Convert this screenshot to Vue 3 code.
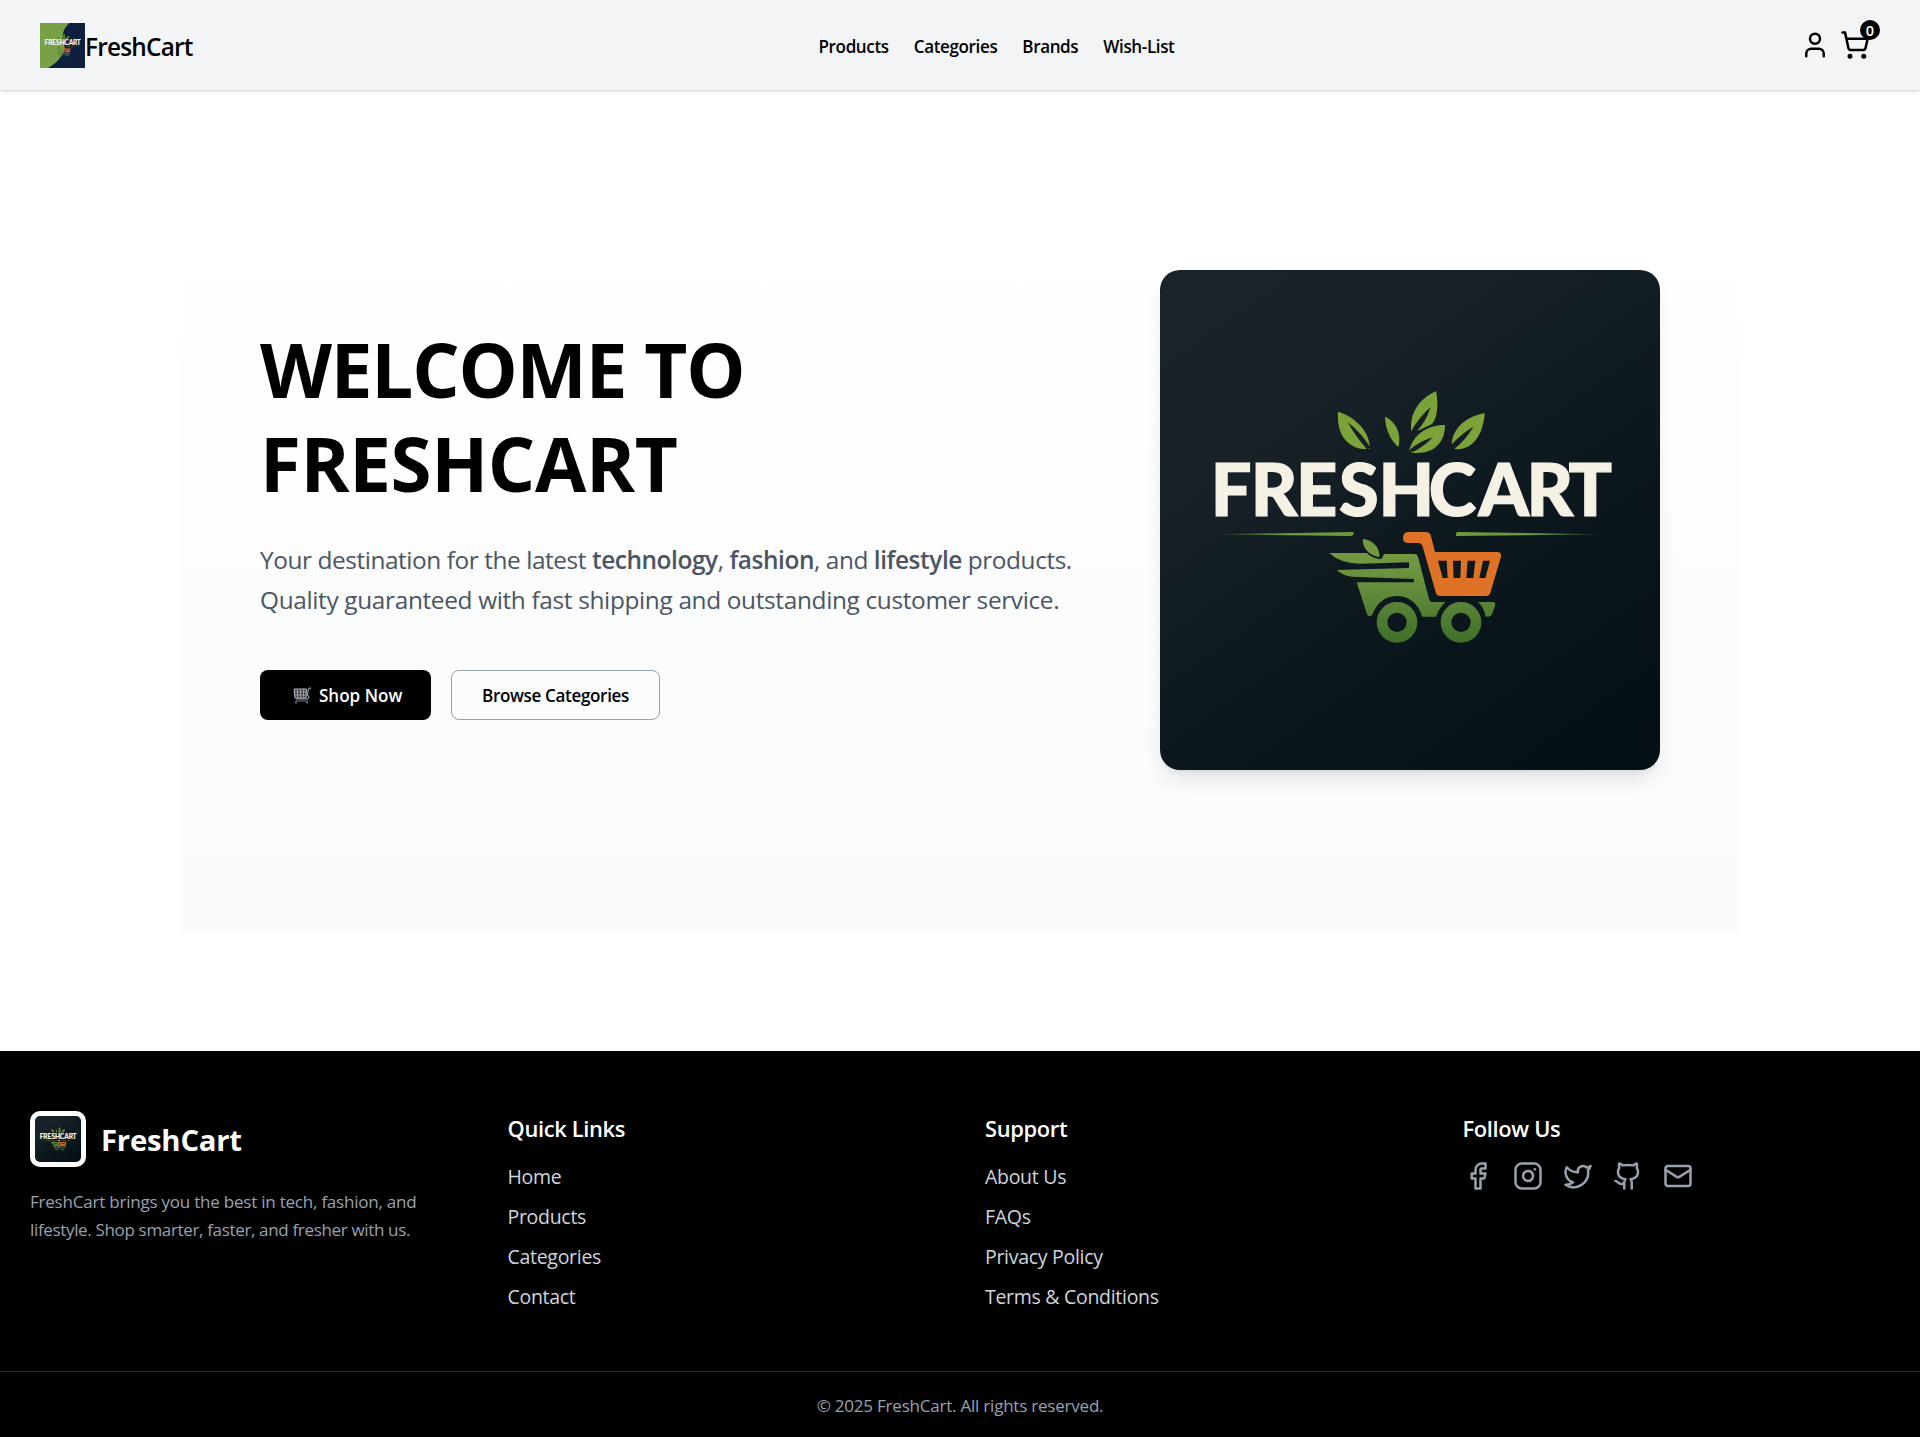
<script setup>
const navLinks = ['Products', 'Categories', 'Brands', 'Wish-List']

const footerColumns = [
  { title: 'Quick Links', links: ['Home', 'Products', 'Categories', 'Contact'] },
  { title: 'Support', links: ['About Us', 'FAQs', 'Privacy Policy', 'Terms & Conditions'] },
]

const socials = [
  { name: 'facebook', paths: ['M18 2h-3a5 5 0 0 0-5 5v3H7v4h3v8h4v-8h3l1-4h-4V7a1 1 0 0 1 1-1h3z'] },
  {
    name: 'instagram',
    paths: [
      'M7 2h10a5 5 0 0 1 5 5v10a5 5 0 0 1-5 5H7a5 5 0 0 1-5-5V7a5 5 0 0 1 5-5z',
      'M16 11.37A4 4 0 1 1 12.63 8 4 4 0 0 1 16 11.37z',
      'M17.5 6.5h.01',
    ],
  },
  {
    name: 'twitter',
    paths: ['M22 4s-.7 2.1-2 3.4c1.6 10-9.4 17.3-18 11.6 2.2.1 4.4-.6 6-2C3 15.5.5 9.6 3 5c2.2 2.6 5.6 4.1 9 4-.9-4.2 4-6.6 7-3.8 1.1 0 3-1.2 3-1.2z'],
  },
  {
    name: 'github',
    paths: [
      'M15 22v-4a4.8 4.8 0 0 0-1-3.5c3 0 6-2 6-5.5.08-1.25-.27-2.48-1-3.5.28-1.15.28-2.35 0-3.5 0 0-1 0-3 1.5-2.64-.5-5.36-.5-8 0C6 2 5 2 5 2c-.3 1.15-.3 2.35 0 3.5A5.403 5.403 0 0 0 4 9c0 3.5 3 5.5 6 5.5-.39.49-.68 1.05-.85 1.65-.17.6-.22 1.23-.15 1.85v4',
      'M9 18c-4.51 2-5-2-7-2',
    ],
  },
  {
    name: 'mail',
    paths: ['M4 4h16a2 2 0 0 1 2 2v12a2 2 0 0 1-2 2H4a2 2 0 0 1-2-2V6a2 2 0 0 1 2-2z', 'm22 7-8.97 5.7a1.94 1.94 0 0 1-2.06 0L2 7'],
  },
]
</script>

<template>
  <div class="page">
    <!-- Shared brand artwork -->
    <svg class="sprite" aria-hidden="true">
      <defs>
        <linearGradient id="night" x1="0.15" y1="0" x2="0.85" y2="1">
          <stop offset="0" stop-color="#1a2329" />
          <stop offset="0.25" stop-color="#182127" />
          <stop offset="0.55" stop-color="#0d191f" />
          <stop offset="1" stop-color="#041015" />
        </linearGradient>
        <linearGradient id="leaf" gradientUnits="userSpaceOnUse" x1="0" y1="540" x2="0" y2="820">
          <stop offset="0" stop-color="#759c43" />
          <stop offset="0.4" stop-color="#648c3c" />
          <stop offset="1" stop-color="#3f6f2a" />
        </linearGradient>
        <linearGradient id="fadeLeft" x1="0" x2="1">
          <stop offset="0" stop-color="#6d9a38" stop-opacity="0.3" />
          <stop offset="0.5" stop-color="#6d9a38" />
        </linearGradient>
        <linearGradient id="fadeRight" x1="1" x2="0">
          <stop offset="0" stop-color="#6d9a38" stop-opacity="0.3" />
          <stop offset="0.5" stop-color="#6d9a38" />
        </linearGradient>
        <symbol id="artwork" viewBox="0 0 500 500">
          <g transform="translate(40 100) scale(0.33333)">
            <g fill="#7ca23a">
              <path d="M414 125C462 138 512 185 509 237C455 242 408 205 414 125Z" />
              <path d="M555 140C584 152 606 188 595 231C573 212 556 180 555 140Z" />
              <path d="M708 63C718 112 709 155 690 167C668 176 655 183 634 184C628 132 655 88 708 63Z" />
              <path
                stroke="#141e24"
                stroke-width="14"
                paint-order="stroke"
                d="M735 165C735 218 700 255 637 248L628 240C640 195 680 165 735 165Z"
              />
              <path d="M854 130C850 197 815 243 764 237L755 222C757 175 800 138 854 130Z" />
            </g>
            <g fill="#141e24">
              <path d="M443 156Q482 187 511 232L502 239Q467 200 443 156Z" />
              <path d="M692 111Q676 160 648 185L633 185Q656 142 692 111Z" />
              <path d="M698 202Q675 228 639 246L627 241Q657 215 698 202Z" />
              <path d="M820 170Q798 209 763 237L754 224Q782 193 820 170Z" />
            </g>
            <path fill="url(#fadeLeft)" d="M45 493L455 486Q464 486 461 492Q458 499 448 498Z" />
            <path fill="url(#fadeRight)" d="M1216 493L775 486Q768 486 768 492V498Z" />
            <g fill="url(#leaf)">
              <path
                d="M388 549L500 549L545 566L552 552H645Q652 552 654 560L688 690Q690 696 697 696H737Q718 712 708 740H667C655 700 625 678 590 678C552 678 527 705 518 732Q514 740 506 739Q502 738 500 730L470 637H642V627L455 620Q425 615 411 600L627 594V577L480 581Q420 580 388 549Z"
              />
              <path d="M834 696H880Q888 698 885 708L876 733Q873 740 865 740H857Q852 712 834 696Z" />
              <path
                fill="#71993f"
                stroke="#121d22"
                stroke-width="10"
                paint-order="stroke"
                d="M489 507C517 508 541 533 538 562C509 556 486 536 489 507Z"
              />
            </g>
            <g fill="none" stroke="url(#leaf)" stroke-width="32">
              <circle cx="591" cy="757" r="45" />
              <circle cx="783" cy="757" r="45" />
            </g>
            <path
              fill="#de7226"
              fill-rule="evenodd"
              d="M624 486H678Q690 487 693 498L705 546H893Q905 547 903 560L871 668Q868 678 858 678H718Q710 678 708 670L668 530Q665 519 655 519H622Q609 517 609 503Q609 488 624 486ZM714 572L728 624H743L740 572ZM759 572L761 624H781L783 572ZM803 572L799 624H820L826 572ZM849 572L838 624H856L870 572Z"
            />
          </g>
          <text class="wordmark" y="246.3" x="50.8 90.8 136 178.9 218.4 268.7 318.4 366.4 408.6">FRESHCART</text>
        </symbol>
      </defs>
    </svg>

    <header class="header">
      <a class="brand">
        <svg class="brand-logo" viewBox="0 0 500 500">
          <rect width="500" height="500" fill="#101f40" />
          <path fill="#78a046" d="M0 0H325C235 90 250 150 270 210C285 330 210 430 90 500H0Z" />
          <use href="#artwork" width="500" height="500" />
        </svg>
        <span class="brand-name">FreshCart</span>
      </a>
      <nav class="nav">
        <a v-for="link in navLinks" :key="link">{{ link }}</a>
      </nav>
      <div class="actions">
        <svg class="icon" viewBox="0 0 24 24">
          <path d="M19 21v-2a4 4 0 0 0-4-4H9a4 4 0 0 0-4 4v2" />
          <circle cx="12" cy="7" r="4" />
        </svg>
        <div class="cart">
          <svg class="icon" viewBox="0 0 24 24">
            <circle cx="8" cy="21" r="1" />
            <circle cx="19" cy="21" r="1" />
            <path d="M2.05 2.05h2l2.66 12.42a2 2 0 0 0 2 1.58h9.78a2 2 0 0 0 1.95-1.57l1.65-7.43H5.12" />
          </svg>
          <span class="badge">0</span>
        </div>
      </div>
    </header>

    <main class="main">
      <section class="hero">
        <div class="hero-copy">
          <h1>
            <span class="line-one">WELCOME TO</span>
            <span class="line-two">FRESHCART</span>
          </h1>
          <p>
            <span class="lead">Your destination for the latest <strong>technology</strong>, <strong>fashion</strong>, and
            <strong>lifestyle</strong> products.</span><br />
            Quality guaranteed with fast shipping and outstanding customer service.
          </p>
          <div class="buttons">
            <a class="btn btn-dark">
              <svg class="trolley" viewBox="0 0 18 17" fill="none">
                <path d="M1 2h12.5l-0.500 9H2z" fill="#3c3e43" stroke="#b9bbc0" />
                <path d="M4.500 2.500v8M7.500 2.500v8M10.500 2.500v8M1.500 5h11.500M2 8h11" stroke="#b9bbc0" stroke-width="0.7" />
                <path d="M17.500 1l-2 1-1 6 1.500 2-1.500 2H3" stroke="#a9abb0" stroke-width="1.100" />
                <path d="M2.500 14h12" stroke="#77797e" />
                <path d="M3 14.500v2M14 14.500v2M17 0.500v1.500" stroke="#5b8fd0" stroke-width="1.500" />
              </svg>
              Shop Now
            </a>
            <a class="btn btn-light">Browse Categories</a>
          </div>
        </div>
        <svg class="hero-image" viewBox="0 0 500 500">
          <rect width="500" height="500" fill="url(#night)" />
          <use href="#artwork" width="500" height="500" />
        </svg>
      </section>
    </main>

    <footer class="footer">
      <div class="footer-grid">
        <div>
          <div class="footer-brand">
            <span class="footer-logo">
              <svg viewBox="0 0 500 500">
                <rect width="500" height="500" fill="url(#night)" />
                <use href="#artwork" width="500" height="500" />
              </svg>
            </span>
            <span class="footer-name">FreshCart</span>
          </div>
          <p class="about">
            FreshCart brings you the best in tech, fashion, and<br />
            <span class="about-end">lifestyle. Shop smarter, faster, and fresher with us.</span>
          </p>
        </div>
        <div v-for="column in footerColumns" :key="column.title">
          <h3>{{ column.title }}</h3>
          <ul>
            <li v-for="link in column.links" :key="link">{{ link }}</li>
          </ul>
        </div>
        <div>
          <h3>Follow Us</h3>
          <div class="socials">
            <svg v-for="social in socials" :key="social.name" class="icon" viewBox="0 0 24 24">
              <path v-for="d in social.paths" :key="d" :d="d" />
            </svg>
          </div>
        </div>
      </div>
      <div class="copyright">© 2025 FreshCart. All rights reserved.</div>
    </footer>
  </div>
</template>

<style>
body {
  margin: 0;
  background: #fff;
}
</style>

<style scoped>
.page {
  min-height: 1437px;
  display: flex;
  flex-direction: column;
  font-family: 'Segoe UI', 'Open Sans', 'Noto Sans', sans-serif;
  color: #000;
}
.sprite {
  position: absolute;
  width: 0;
  height: 0;
}
.wordmark {
  font-family: Lato, sans-serif;
  font-weight: 900;
  font-size: 72px;
  fill: #f6f1e5;
  stroke: #f6f1e5;
  stroke-width: 1.2px;
}
.icon {
  display: block;
  width: 30px;
  height: 30px;
  fill: none;
  stroke: currentColor;
  stroke-width: 2;
  stroke-linecap: round;
  stroke-linejoin: round;
}

.header {
  box-sizing: border-box;
  height: 90px;
  padding: 1px 40px 0;
  display: grid;
  grid-template-columns: 1fr auto 1fr;
  align-items: center;
  background: #f3f4f6;
  box-shadow: 0 1px 4px rgba(0, 0, 0, 0.1), 0 1px 2px rgba(0, 0, 0, 0.1);
}
.brand {
  display: flex;
  align-items: center;
}
.brand-logo {
  width: 45px;
  height: 45px;
}
.brand-name {
  padding-top: 2px;
  font-size: 24.4px;
  font-weight: 600;
  letter-spacing: -0.032em;
  line-height: 35px;
}
.nav {
  display: flex;
  gap: 25px;
  padding: 1px 0 0 73px;
  font-size: 17.06px;
  font-weight: 600;
  letter-spacing: -0.022em;
  line-height: 25px;
}
.actions {
  display: flex;
  justify-content: flex-end;
  gap: 10px;
  padding: 0 10px 2px 0;
}
.cart {
  position: relative;
}
.badge {
  position: absolute;
  top: -10px;
  right: -10px;
  width: 20px;
  height: 20px;
  border-radius: 50%;
  background: #000;
  color: #fff;
  font-size: 14.5px;
  font-weight: 600;
  line-height: 21px;
  text-align: center;
}

.main {
  padding: 120px 180px;
}
.hero {
  box-sizing: border-box;
  height: 721px;
  padding: 60px 80px 0;
  display: flex;
  align-items: flex-start;
  justify-content: space-between;
  background: linear-gradient(#fff, #f9fafb);
}
.hero-copy {
  padding-top: 52px;
}
h1 {
  margin: 0 0 30px;
  font-size: 74.5px;
  font-weight: 700;
  line-height: 94px;
}
h1 span {
  display: block;
}
.line-one {
  letter-spacing: -1.2px;
}
.line-two {
  letter-spacing: -0.4px;
}
.hero p {
  margin: 0 0 50px;
  color: #4b5563;
  font-size: 24.4px;
  line-height: 40px;
  letter-spacing: -0.014em;
  white-space: nowrap;
}
.hero .lead {
  letter-spacing: -0.0175em;
}
.hero strong {
  font-weight: 600;
}
.buttons {
  display: flex;
  gap: 20px;
}
.btn {
  box-sizing: border-box;
  height: 50px;
  display: flex;
  align-items: center;
  border-radius: 8px;
  font-size: 17.06px;
  font-weight: 600;
}
.btn-dark {
  width: 171px;
  padding-left: 33px;
  gap: 8px;
  background: #000;
  color: #fff;
}
.trolley {
  width: 18px;
  height: 17px;
}
.btn-light {
  width: 209px;
  justify-content: center;
  border: 1px solid #99a1af;
  letter-spacing: -0.02em;
}
.hero-image {
  flex: none;
  width: 500px;
  height: 500px;
  border-radius: 20px;
  box-shadow: 0 12px 19px -4px rgba(0, 0, 0, 0.1), 0 5px 7px -5px rgba(0, 0, 0, 0.1);
}

.footer {
  background: #000;
  color: #fff;
}
.footer-grid {
  display: grid;
  grid-template-columns: repeat(4, 1fr);
  gap: 50px;
  padding: 60px 30px;
}
.footer-brand {
  display: flex;
  align-items: center;
  gap: 15px;
  margin-bottom: 21px;
}
.footer-logo {
  padding: 5px;
  border-radius: 10px;
  background: #fff;
}
.footer-logo svg {
  display: block;
  width: 46px;
  height: 46px;
  border-radius: 5px;
}
.footer-name {
  padding-top: 2px;
  font-size: 29.25px;
  font-weight: 700;
  letter-spacing: -0.2px;
}
.about {
  margin: 0;
  color: #99a1af;
  font-size: 17.06px;
  line-height: 28.4px;
  letter-spacing: -0.014em;
  white-space: nowrap;
}
.about-end {
  letter-spacing: -0.021em;
}
h3 {
  margin: 0 0 15px;
  font-size: 21.9px;
  font-weight: 600;
  line-height: 35px;
  letter-spacing: -0.016em;
}
ul {
  margin: 0;
  padding: 1px 0 0;
  list-style: none;
  display: flex;
  flex-direction: column;
  gap: 10px;
  color: #d1d5dc;
  font-size: 19.5px;
  line-height: 30px;
  letter-spacing: -0.015em;
}
li:last-child {
  margin-bottom: -1px;
}
.socials {
  display: flex;
  gap: 20px;
  color: #99a1af;
}
.copyright {
  padding: 21px 0 19px;
  border-top: 1px solid #1e2939;
  color: #99a1af;
  font-size: 17.06px;
  line-height: 25px;
  letter-spacing: -0.014em;
  text-align: center;
}
</style>
